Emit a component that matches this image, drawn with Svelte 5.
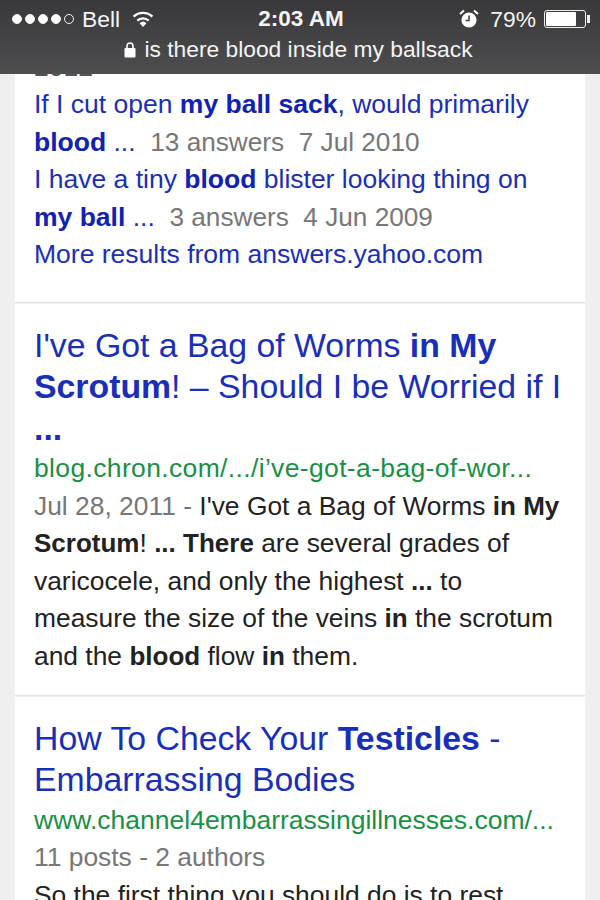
<script>
  const signal = [1, 1, 1, 1, 0];
</script>

<div class="screen">
  <header class="bar">
    <div class="status">
      <div class="left">
        <span class="dots">
          {#each signal as on}
            <i class:on></i>
          {/each}
        </span>
        <span>Bell</span>
        <svg class="wifi" width="24" height="18" viewBox="0 0 24 18" aria-hidden="true">
          <path d="M12 17 L8.6 13.2 A5 5 0 0 1 15.4 13.2 Z" fill="#fff" />
          <path d="M6.3 10.6 A8.4 8.4 0 0 1 17.7 10.6" fill="none" stroke="#fff" stroke-width="2.2" />
          <path d="M2.6 6.6 A13.6 13.6 0 0 1 21.4 6.6" fill="none" stroke="#fff" stroke-width="2.2" />
        </svg>
      </div>
      <strong class="time">2:03 AM</strong>
      <div class="right">
        <svg width="20" height="20" viewBox="0 0 20 20" aria-hidden="true">
          <circle cx="10" cy="11" r="7.6" fill="#fff" />
          <path d="M10 6.5 V11.5 H6.5" fill="none" stroke="#444" stroke-width="1.6" />
          <path d="M1 5 L5 1.5 M19 5 L15 1.5" stroke="#fff" stroke-width="2" />
        </svg>
        <span class="pct">79%</span>
        <span class="battery"><span class="charge"></span></span>
        <span class="nub"></span>
      </div>
    </div>
    <div class="url">
      <svg width="12" height="17" viewBox="0 0 12 17" aria-hidden="true">
        <path d="M3 8 V5 A3 3 0 0 1 9 5 V8" fill="none" stroke="#fff" stroke-width="1.6" />
        <rect x="0.5" y="7" width="11" height="9.5" rx="1" fill="#fff" />
      </svg>
      <span>is there blood inside my ballsack</span>
    </div>
  </header>

  <main class="results">
    <section class="card first">
      <div class="clipped">2012</div>
      <a class="sub">If I cut open <b>my ball sack</b>, would primarily</a>
      <div class="sub"><a><b>blood</b> ...</a> <span class="meta">&nbsp;13 answers &nbsp;7 Jul 2010</span></div>
      <a class="sub">I have a tiny <b>blood</b> blister looking thing on</a>
      <div class="sub"><a><b>my ball</b> ...</a> <span class="meta">&nbsp;3 answers &nbsp;4 Jun 2009</span></div>
      <a class="sub">More results from answers.yahoo.com</a>
    </section>

    <section class="card roomy">
      <h2>I've Got a Bag of Worms <b>in My Scrotum</b>! – Should I be Worried if I <b>...</b></h2>
      <div class="link wide">blog.chron.com/.../i’ve-got-a-bag-of-wor...</div>
      <p><span class="meta">Jul 28, 2011 -</span> I've Got a Bag of Worms <b>in My Scrotum</b>! <b>... There</b> are several grades of varicocele, and only the highest <b>...</b> to measure the size of the veins <b>in</b> the scrotum and the <b>blood</b> flow <b>in</b> them.</p>
    </section>

    <section class="card">
      <h2>How To Check Your <b>Testicles</b> - Embarrassing Bodies</h2>
      <div class="link">www.channel4embarrassingillnesses.com/...</div>
      <p><span class="meta">11 posts - 2 authors</span></p>
      <p>So the first thing you should do is to rest</p>
    </section>
  </main>
</div>

<style>
  :global(body) {
    margin: 0;
    background: #efefef;
  }

  .screen {
    width: 600px;
    height: 900px;
    display: flex;
    flex-direction: column;
    overflow: hidden;
    font-family: "Liberation Sans", Arial, sans-serif;
  }

  .bar {
    flex: none;
    height: 74px;
    box-sizing: border-box;
    padding-top: 4px;
    background: linear-gradient(#38383a, #4e4e50);
    color: #f4f4f4;
    font-size: 22.8px;
  }

  .status {
    display: grid;
    grid-template-columns: 1fr auto 1fr;
    align-items: center;
    height: 30px;
    padding: 0 10px 0 12px;
  }

  .left {
    display: flex;
    align-items: center;
    gap: 7px;
  }

  .wifi {
    margin-left: 4px;
  }

  .dots {
    display: flex;
    gap: 3px;
    margin-right: 1px;
  }

  .dots i {
    width: 10px;
    height: 10px;
    box-sizing: border-box;
    border: 1px solid #f4f4f4;
    border-radius: 50%;
  }

  .dots i.on {
    background: #fff;
  }

  .time {
    font-size: 22.5px;
  }

  .right {
    display: flex;
    align-items: center;
    justify-content: flex-end;
  }

  .pct {
    margin: 0 8px 0 11px;
  }

  .battery {
    width: 38px;
    height: 14px;
    padding: 1px;
    border: 1px solid #eee;
    border-radius: 3px;
  }

  .charge {
    display: block;
    width: 30px;
    height: 100%;
    background: #fff;
    border-radius: 1px;
  }

  .nub {
    width: 3px;
    height: 8px;
    margin-left: 1px;
    background: #eee;
  }

  .url {
    display: flex;
    justify-content: center;
    align-items: center;
    gap: 8px;
    height: 31px;
    padding-right: 3px;
  }

  .results {
    flex: none;
    overflow: hidden;
    padding: 0 15px;
  }

  .card {
    margin-bottom: 1px;
    padding: 0 19px;
    background: #fff;
    border-bottom: 1px solid #e4e4e4;
    color: #222;
    font-size: 26.5px;
    line-height: 37.5px;
  }

  .first {
    height: 229px;
    padding-top: 12px;
    box-sizing: border-box;
    overflow: hidden;
  }

  .first .meta {
    font-size: 26.2px;
  }

  .roomy {
    padding-bottom: 20px;
  }

  .clipped {
    height: 0;
    transform: translateY(-37px);
    color: #555;
  }

  .sub {
    display: block;
    white-space: nowrap;
  }

  a {
    color: #1a2fb8;
  }

  a b {
    color: #1222b0;
  }

  .meta {
    color: #777;
  }

  h2 {
    margin: 0;
    padding-top: 20.5px;
    color: #1a2fb8;
    font-size: 33.8px;
    font-weight: normal;
    line-height: 41.5px;
  }

  .link {
    margin-top: 1px;
    color: #1a8f46;
    white-space: nowrap;
  }

  .wide {
    letter-spacing: 0.35px;
  }

  p {
    margin: 0;
    font-size: 26.4px;
  }

  p b {
    font-size: 26px;
  }
</style>
